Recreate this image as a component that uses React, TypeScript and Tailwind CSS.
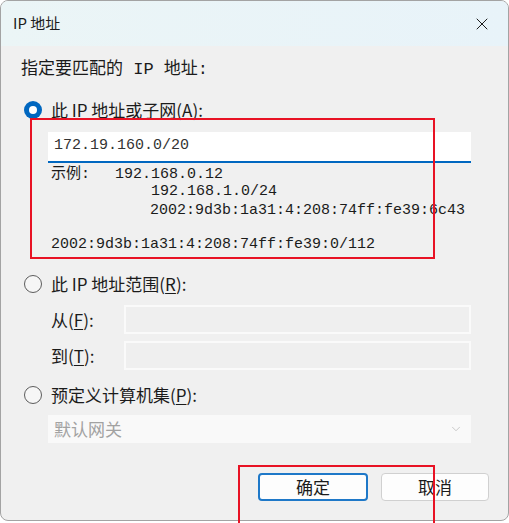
import { X, ChevronDown } from "lucide-react";

const ui = { fontFamily: '"Noto Sans CJK SC", "Noto Sans", sans-serif' };
const mono = { fontFamily: '"Liberation Mono", "Noto Sans CJK SC", monospace' };

const Radio = ({ checked }: { checked?: boolean }) =>
  checked ? (
    <span className="w-[18px] h-[18px] rounded-full bg-[#0067c0] flex items-center justify-center shrink-0">
      <span className="w-[8px] h-[8px] rounded-full bg-white" />
    </span>
  ) : (
    <span className="w-[18px] h-[18px] rounded-full border border-[#5c5c5c] bg-[#f6f6f6] shrink-0" />
  );

const Mn = ({ c }: { c: string }) => (
  <>
    (<span className="underline underline-offset-2">{c}</span>):
  </>
);

export default function App() {
  return (
    <div className="relative w-[509px] h-[523px] bg-white overflow-hidden text-[#1b1b1b]" style={ui}>
      <div className="w-full h-[521px] border border-[#a3a3a3] rounded-lg overflow-hidden flex flex-col bg-[#f0f0f0]">
        {/* title bar */}
        <div className="h-[45px] shrink-0 flex items-center justify-between bg-gradient-to-r from-[#ebf5f6] to-[#e8f3f9] pl-[12px] pr-[16px]">
          <span className="text-[15px]">IP 地址</span>
          <X size={20} strokeWidth={1.2} className="text-[#1b1b1b]" />
        </div>

        <div className="flex-1 flex flex-col">
          <p className="mt-[13px] ml-[20px] text-[17px] leading-[22px]" style={mono}>
            指定要匹配的 IP 地址:
          </p>

          <div className="mt-[19px] ml-[23px] flex items-center gap-[9px] text-[17px] leading-[20px]">
            <Radio checked />
            <span>
              此 IP 地址或子网<Mn c="A" />
            </span>
          </div>

          <div className="mt-[12px] ml-[47px] w-[423px] h-[31px] bg-white border-b-2 border-[#0067c0] flex items-center pl-[6px] text-[15px] text-[#333]" style={mono}>
            172.19.160.0/20
          </div>

          <div className="ml-[50px] mt-[3px] text-[15px] leading-[17px]" style={mono}>
            <div className="flex">
              <span className="w-[64px]">示例:</span>
              <span>192.168.0.12</span>
            </div>
            <div className="pl-[100px]">192.168.1.0/24</div>
            <div className="pl-[99px] mt-[2px]">2002:9d3b:1a31:4:208:74ff:fe39:6c43</div>
            <div className="mt-[17px]">2002:9d3b:1a31:4:208:74ff:fe39:0/112</div>
          </div>

          <div className="mt-[21px] ml-[23px] flex items-center gap-[9px] text-[17px] leading-[20px]">
            <Radio />
            <span>
              此 IP 地址范围<Mn c="R" />
            </span>
          </div>

          <div className="mt-[11px] ml-[50px] flex flex-col gap-[7px] text-[17px]">
            {[
              ["从", "F"],
              ["到", "T"],
            ].map(([t, k]) => (
              <div key={k} className="flex items-center">
                <span className="w-[73px]">
                  {t}
                  <Mn c={k} />
                </span>
                <div className="w-[347px] h-[29px] bg-[#efefef] border-2 border-[#fafafa]" />
              </div>
            ))}
          </div>

          <div className="mt-[15px] ml-[23px] flex items-center gap-[9px] text-[17px] leading-[20px]">
            <Radio />
            <span>
              预定义计算机集<Mn c="P" />
            </span>
          </div>

          <div className="mt-[10px] ml-[47px] w-[423px] h-[28px] bg-[#f9f9f9] flex items-center justify-between pl-[6px] pr-[8px] text-[17px] text-[#a2a2a2]">
            <span>默认网关</span>
            <ChevronDown size={14} strokeWidth={1.2} className="text-[#b5b5b5]" />
          </div>

          <div className="mt-[30px] ml-[257px] flex gap-[13px] text-[17px]">
            <button className="w-[110px] h-[28px] rounded-[4px] bg-[#fdfdfd] border-2 border-[#1e78c8] flex items-center justify-center">
              确定
            </button>
            <button className="w-[108px] h-[28px] rounded-[4px] bg-[#fdfdfd] border border-[#d0d0d0] flex items-center justify-center">
              取消
            </button>
          </div>
        </div>
      </div>

      {/* annotation boxes */}
      <div className="absolute left-[30px] top-[118px] w-[405px] h-[141px] border-2 border-[#e81224]" />
      <div className="absolute left-[238px] top-[465px] w-[197px] h-[70px] border-2 border-[#e81224]" />
    </div>
  );
}
